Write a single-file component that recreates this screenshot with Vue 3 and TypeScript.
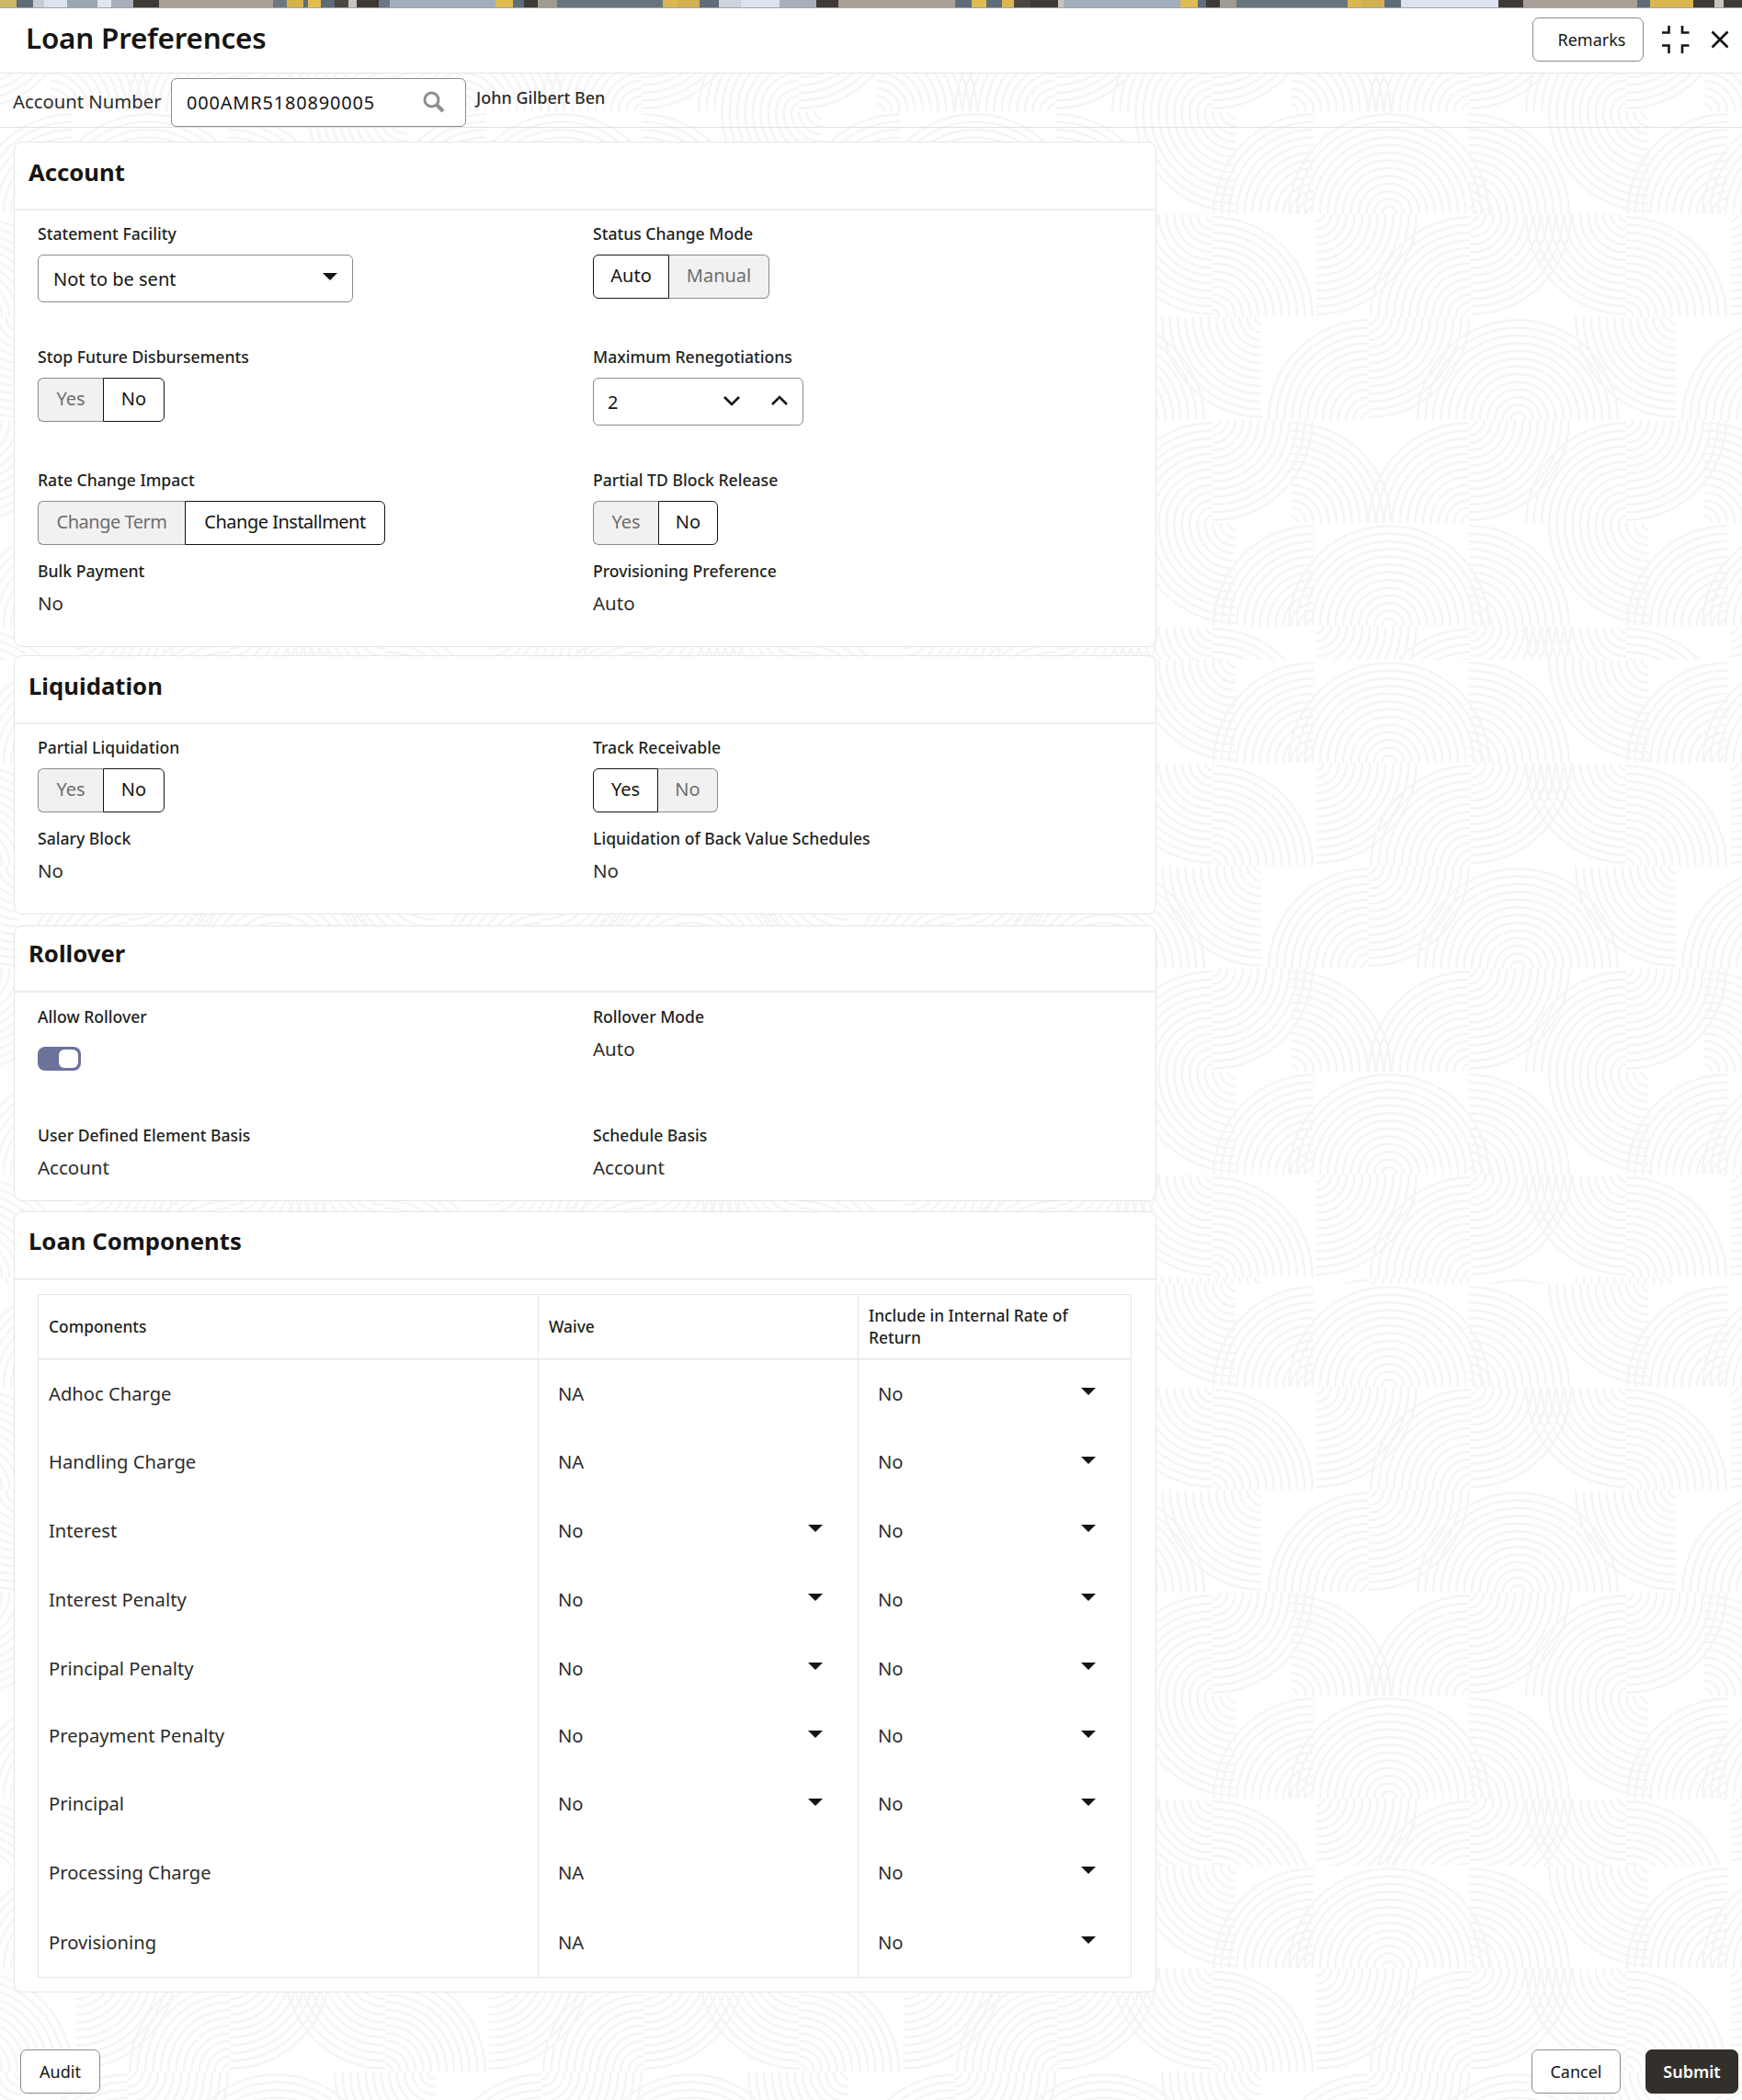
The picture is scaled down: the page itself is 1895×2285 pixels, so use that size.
<script setup lang="ts">
type Quad = 'UL' | 'UR' | 'LL' | 'LR'
const rowsDef: [Quad, number, number][][] = [
  [['LL', 84, 0], ['UL', 169, 112], ['UL', 251, 112], ['UR', 251, 112], ['UR', 338, 112]],
  [['LL', 59, 0], ['UR', 59, 112], ['LR', 172, 0], ['UL', 340, 112], ['LR', 340, 0]],
  [['LL', 113, 0], ['UL', 229, 112], ['LR', 229, 0], ['UL', 391, 112], ['UR', 391, 112]],
  [['UL', 59, 112], ['LR', 59, 0], ['UR', 144, 112], ['UL', 338, 112], ['LR', 338, 0]],
]
function arc(q: Quad, cx: number, cy: number, r: number): string {
  if (q === 'UL') return `M${cx - r} ${cy}A${r} ${r} 0 0 1 ${cx} ${cy - r}`
  if (q === 'UR') return `M${cx} ${cy - r}A${r} ${r} 0 0 1 ${cx + r} ${cy}`
  if (q === 'LL') return `M${cx - r} ${cy}A${r} ${r} 0 0 0 ${cx} ${cy + r}`
  return `M${cx} ${cy + r}A${r} ${r} 0 0 0 ${cx + r} ${cy}`
}
let d = ''
rowsDef.forEach((row, i) => {
  row.forEach(([q, x, y]) => {
    for (const off of [-450, 0, 450]) {
      for (let r = 8; r <= 110; r += 8.4) d += arc(q, x + off, y + i * 112, r)
    }
  })
})
const tilePath = d
const layers = [
  { id: 'bg1', y: 0, h: 718, a: 121 },
  { id: 'bg2', y: 718, h: 679, a: 718 },
  { id: 'bg3', y: 1397, h: 633, a: 1397 },
  { id: 'bg4', y: 2030, h: 255, a: 2030 },
]

interface Comp { name: string; waive: string; irr: string }
const components: Comp[] = [
  { name: 'Adhoc Charge', waive: 'NA', irr: 'No' },
  { name: 'Handling Charge', waive: 'NA', irr: 'No' },
  { name: 'Interest', waive: 'No', irr: 'No' },
  { name: 'Interest Penalty', waive: 'No', irr: 'No' },
  { name: 'Principal Penalty', waive: 'No', irr: 'No' },
  { name: 'Prepayment Penalty', waive: 'No', irr: 'No' },
  { name: 'Principal', waive: 'No', irr: 'No' },
  { name: 'Processing Charge', waive: 'NA', irr: 'No' },
  { name: 'Provisioning', waive: 'NA', irr: 'No' },
]
</script>

<template>
  <div class="page">
    <svg class="backdrop" width="1895" height="2285" aria-hidden="true">
      <defs>
        <pattern
          v-for="l in layers"
          :key="l.id"
          :id="l.id"
          patternUnits="userSpaceOnUse"
          width="450"
          height="448"
          :patternTransform="`translate(360 ${l.a})`"
        >
          <path :d="tilePath" fill="none" stroke="#f5f5f5" stroke-width="2.5" />
        </pattern>
      </defs>
      <rect v-for="l in layers" :key="l.id" x="0" :y="l.y" width="1895" :height="l.h" :fill="`url(#${l.id})`" />
    </svg>

    <div class="content">
      <div class="strip"></div>

      <header class="titlebar">
        <h1>Loan Preferences</h1>
        <div class="title-actions">
          <button class="btn remarks">Remarks</button>
          <svg class="ico-collapse" width="30" height="30" viewBox="0 0 30 30" fill="none" stroke="#161513" stroke-width="2.6">
            <path d="M0 7.5h7.5V0M22 0v7.5h7.5M0 21.5h7.5V30M29.5 21.5H22V30" />
          </svg>
          <svg class="ico-close" width="20" height="20" viewBox="0 0 20 20" fill="none" stroke="#161513" stroke-width="2.6">
            <path d="M1.5 1.5l17 17M18.5 1.5l-17 17" />
          </svg>
        </div>
      </header>

      <div class="subbar">
        <span class="acc-label">Account Number</span>
        <div class="acc-input">
          <span class="acc-num">000AMR5180890005</span>
          <svg width="24" height="24" viewBox="0 0 24 24" fill="none" stroke="#8f8e8c" stroke-width="3">
            <circle cx="9.5" cy="9.5" r="7.5" />
            <path d="M15 15l7 7" stroke-width="4" />
          </svg>
        </div>
        <span class="acc-name">John Gilbert Ben</span>
      </div>

      <section class="card card-account">
        <h2 class="card-title">Account</h2>
        <div class="fields rows-account">
          <div class="field">
            <label>Statement Facility</label>
            <div class="select">
              <span>Not to be sent</span>
              <i class="tri"></i>
            </div>
          </div>
          <div class="field">
            <label>Status Change Mode</label>
            <div class="seg">
              <span class="opt on w83">Auto</span>
              <span class="opt off w109">Manual</span>
            </div>
          </div>
          <div class="field">
            <label>Stop Future Disbursements</label>
            <div class="seg">
              <span class="opt off w71">Yes</span>
              <span class="opt on w67">No</span>
            </div>
          </div>
          <div class="field">
            <label>Maximum Renegotiations</label>
            <div class="stepper">
              <span class="stepper-val">2</span>
              <svg class="chev-down" width="20" height="12" viewBox="0 0 20 12" fill="none" stroke="#161513" stroke-width="2.6">
                <path d="M2 2l8 8 8-8" />
              </svg>
              <svg class="chev-up" width="20" height="12" viewBox="0 0 20 12" fill="none" stroke="#161513" stroke-width="2.6">
                <path d="M2 10l8-8 8 8" />
              </svg>
            </div>
          </div>
          <div class="field">
            <label>Rate Change Impact</label>
            <div class="seg tight">
              <span class="opt off w160">Change Term</span>
              <span class="opt on w218">Change Installment</span>
            </div>
          </div>
          <div class="field">
            <label>Partial TD Block Release</label>
            <div class="seg">
              <span class="opt off w71">Yes</span>
              <span class="opt on w65">No</span>
            </div>
          </div>
          <div class="field">
            <label>Bulk Payment</label>
            <div class="value">No</div>
          </div>
          <div class="field">
            <label>Provisioning Preference</label>
            <div class="value">Auto</div>
          </div>
        </div>
      </section>

      <section class="card card-liq">
        <h2 class="card-title">Liquidation</h2>
        <div class="fields rows-liq">
          <div class="field">
            <label>Partial Liquidation</label>
            <div class="seg">
              <span class="opt off w71">Yes</span>
              <span class="opt on w67">No</span>
            </div>
          </div>
          <div class="field">
            <label>Track Receivable</label>
            <div class="seg">
              <span class="opt on w71">Yes</span>
              <span class="opt off w65">No</span>
            </div>
          </div>
          <div class="field">
            <label>Salary Block</label>
            <div class="value">No</div>
          </div>
          <div class="field">
            <label>Liquidation of Back Value Schedules</label>
            <div class="value">No</div>
          </div>
        </div>
      </section>

      <section class="card card-roll">
        <h2 class="card-title short">Rollover</h2>
        <div class="fields rows-roll">
          <div class="field">
            <label>Allow Rollover</label>
            <div class="toggle"><i></i></div>
          </div>
          <div class="field">
            <label>Rollover Mode</label>
            <div class="value">Auto</div>
          </div>
          <div class="field">
            <label>User Defined Element Basis</label>
            <div class="value">Account</div>
          </div>
          <div class="field">
            <label>Schedule Basis</label>
            <div class="value">Account</div>
          </div>
        </div>
      </section>

      <section class="card card-comp">
        <h2 class="card-title">Loan Components</h2>
        <table class="grid">
          <colgroup>
            <col class="c1" />
            <col class="c2" />
            <col class="c3" />
          </colgroup>
          <thead>
            <tr>
              <th>Components</th>
              <th>Waive</th>
              <th>Include in Internal Rate of Return</th>
            </tr>
          </thead>
          <tbody>
            <tr v-for="c in components" :key="c.name">
              <td class="name">{{ c.name }}</td>
              <td class="pick p-waive">
                <div class="pick-in">
                  <span>{{ c.waive }}</span>
                  <i v-if="c.waive === 'No'" class="tri"></i>
                </div>
              </td>
              <td class="pick p-irr">
                <div class="pick-in">
                  <span>{{ c.irr }}</span>
                  <i class="tri"></i>
                </div>
              </td>
            </tr>
          </tbody>
        </table>
      </section>

      <footer class="actions">
        <button class="btn audit">Audit</button>
        <div class="actions-right">
          <button class="btn cancel">Cancel</button>
          <button class="btn submit">Submit</button>
        </div>
      </footer>
    </div>
  </div>
</template>

<style>
html, body { margin: 0; background: #fff; }
</style>

<style scoped>
.page {
  position: relative;
  width: 1895px;
  height: 2285px;
  overflow: hidden;
  background: #fff;
  color: #161513;
  font-family: "Noto Sans", "Open Sans", sans-serif;
}
.backdrop { position: absolute; left: 0; top: 0; }
.content { position: relative; display: flex; flex-direction: column; height: 2285px; }

.strip {
  height: 9px;
  box-sizing: border-box;
  border-bottom: 1px solid #a3a5a8;
  background: linear-gradient(90deg,
    #cdb766 0 18px, #5d6b78 18px 36px, #c5ccd3 36px 48px, #dbe4ee 48px 73px, #9aa6b1 73px 106px,
    #e0e6ec 106px 121px, #a7b0ba 121px 145px, #3f3a35 145px 173px, #a9a196 173px 297px,
    #6a7885 297px 312px, #d6b24a 312px 330px, #5e6b78 330px 335px, #e2bd4c 335px 349px, #5e6b78 349px 364px,
    #4a4640 364px 379px, #c7c4bb 379px 388px, #3d3935 388px 412px, #6a7885 412px 424px,
    #a2aebb 424px 539px, #e0bc50 539px 558px, #5f6d7b 558px 570px, #3f3a35 570px 585px,
    #a09a90 585px 606px, #68757f 606px 721px, #dcb64e 721px 737px, #d3b052 737px 761px,
    #5f6d7b 761px 782px, #cbd3db 782px 806px, #dbe4ee 806px 848px, #a7b0ba 848px 888px,
    #3f3a35 888px 912px, #a9a196 912px 1039px, #5f6d7b 1039px 1057px, #e0bc50 1057px 1073px, #5f6d7b 1073px 1090px,
    #d9b64e 1090px 1103px, #4a4640 1103px 1121px, #3d3935 1121px 1151px, #c7c4bb 1151px 1157px,
    #a2aebb 1157px 1284px, #e0bc50 1284px 1303px, #5f6d7b 1303px 1312px, #3f3a35 1312px 1327px,
    #a09a90 1327px 1345px, #68757f 1345px 1466px, #dcb64e 1466px 1481px, #d3b052 1481px 1506px,
    #5f6d7b 1506px 1524px, #dbe4ee 1524px 1630px, #3f3a35 1630px 1657px, #a9a196 1657px 1781px,
    #5f6d7b 1781px 1795px, #dcb64e 1795px 1842px, #3f3a35 1842px 1865px, #c7c4bb 1865px 1875px, #3d3935 1875px 1895px);
}

.titlebar {
  height: 71px;
  box-sizing: border-box;
  display: flex;
  align-items: center;
  justify-content: space-between;
  padding: 0 14px 2px 28px;
  background: #fff;
  border-bottom: 1px solid #e4e4e4;
}
.titlebar h1 { margin: -5px 0 0; font-size: 31.4px; font-weight: 600; line-height: 40px; letter-spacing: -0.2px; }
.title-actions { display: flex; align-items: center; }
.ico-collapse { margin-left: 20px; }
.ico-close { margin-left: 23px; }

.btn {
  font-family: inherit;
  height: 48px;
  box-sizing: border-box;
  border: 1px solid #8c8b8a;
  border-radius: 7px;
  background: #fff;
  color: #161513;
  font-size: 18px;
  padding: 0;
}
.remarks { width: 121px; padding-left: 8px; }

.subbar {
  height: 59px;
  box-sizing: border-box;
  padding: 5px 0 0 14px;
  display: flex;
  align-items: flex-start;
  border-bottom: 1px solid #e0e0e0;
}
.acc-label { font-size: 20.3px; line-height: 50px; color: #2e2c2a; width: 172px; flex: none; }
.acc-input {
  width: 321px;
  height: 53px;
  box-sizing: border-box;
  border: 1px solid #8c8b8a;
  border-radius: 6px;
  background: #fff;
  display: flex;
  align-items: center;
  justify-content: space-between;
  padding: 0 22px 0 16px;
  font-size: 20px;
}
.acc-num { letter-spacing: 0.8px; }
.acc-input svg { margin-top: -2px; }
.acc-name { margin-left: 11px; font-size: 18px; font-weight: 500; line-height: 42px; color: #2e2c2a; }

.card {
  width: 1243px;
  box-sizing: border-box;
  margin-left: 15px;
  background: #fff;
  border: 1px solid #e6e6e6;
  border-radius: 9px;
}
.card-account { margin-top: 15px; height: 550px; }
.card-liq { margin-top: 9px; height: 282px; }
.card-roll { margin-top: 12px; height: 300px; }
.card-comp { margin-top: 11px; height: 850px; }

.card-title {
  margin: 0;
  height: 74px;
  box-sizing: border-box;
  padding: 11px 0 0 15px;
  border-bottom: 2px solid #ededed;
  font-size: 25.7px;
  font-weight: 700;
  line-height: 44px;
}
.card-title.short { height: 72px; padding-top: 8px; }
.card-comp .card-title { padding-top: 10px; }

.fields {
  display: grid;
  grid-template-columns: 604px 1fr;
  padding: 13px 0 0 25px;
}
.rows-account { grid-template-rows: 134px 134px 99px 100px; }
.rows-liq { grid-template-rows: 99px 100px; }
.rows-roll { grid-template-rows: 129px 90px; padding-top: 14px; }

.field label {
  display: block;
  font-size: 17.6px;
  font-weight: 500;
  line-height: 24px;
  margin-bottom: 11px;
  color: #211f1d;
}
.value { font-size: 20.5px; line-height: 24px; color: #2e2c2a; }

.select {
  width: 343px;
  height: 52px;
  box-sizing: border-box;
  border: 1px solid #8c8b8a;
  border-radius: 6px;
  display: flex;
  align-items: center;
  justify-content: space-between;
  padding: 0 16px 0 16px;
  font-size: 20px;
}
.select .tri { margin-top: -4px; }
.tri {
  display: inline-block;
  width: 0;
  height: 0;
  border-left: 8px solid transparent;
  border-right: 8px solid transparent;
  border-top: 8px solid #161513;
}

.seg { display: flex; height: 48px; font-size: 20px; }
.seg.tight { letter-spacing: -0.5px; }
.opt {
  box-sizing: border-box;
  display: flex;
  align-items: center;
  justify-content: center;
  padding-bottom: 4px;
}
.opt.on { background: #fff; border: 1px solid #161513; color: #161513; }
.opt.off { background: #f1f1f1; border: 1px solid #8c8b8a; color: #6f6e6c; }
.opt:first-child { border-radius: 6px 0 0 6px; }
.opt:last-child { border-radius: 0 6px 6px 0; }
.opt.off:first-child { border-right: 0; }
.opt.off:last-child { border-left: 0; }
.w83 { width: 83px; }
.w109 { width: 109px; }
.w71 { width: 71px; }
.w67 { width: 67px; }
.w65 { width: 65px; }
.w160 { width: 160px; }
.w218 { width: 218px; }

.stepper {
  width: 229px;
  height: 52px;
  box-sizing: border-box;
  border: 1px solid #8c8b8a;
  border-radius: 6px;
  display: flex;
  align-items: center;
  padding-left: 15px;
  font-size: 20px;
}
.stepper-val { width: 125px; }
.chev-down, .chev-up { margin-top: -2px; }
.chev-up { margin-left: 32px; }

.toggle {
  width: 47px;
  height: 26px;
  box-sizing: border-box;
  margin-top: 21px;
  background: #6c739b;
  border-radius: 8px;
  padding: 3px 3px 3px 23px;
}
.toggle i { display: block; height: 20px; background: #fff; border-radius: 6px; }

.grid {
  margin: 15px 0 0 25px;
  width: 1189px;
  table-layout: fixed;
  border-collapse: collapse;
  border: 1px solid #e6e6e6;
}
.c1 { width: 544px; }
.c2 { width: 348px; }
.c3 { width: 297px; }
.grid th {
  height: 70px;
  box-sizing: border-box;
  padding: 0 40px 0 11px;
  text-align: left;
  font-size: 17.4px;
  font-weight: 500;
  line-height: 24px;
  color: #211f1d;
  border-bottom: 2px solid #ebebeb;
  border-left: 1px solid #e6e6e6;
}
.grid td {
  height: 74.8px;
  box-sizing: border-box;
  padding: 0 0 1px;
  font-size: 20.2px;
  color: #2e2c2a;
  border-left: 1px solid #e6e6e6;
}
.grid tbody tr:nth-child(6) td { height: 72.8px; }
.grid tbody tr:nth-child(9) td { height: 76.8px; }
.grid td.name { padding-left: 11px; }
.pick-in { display: flex; align-items: center; justify-content: space-between; padding: 0 38px 0 21px; }
.pick .tri { margin-top: -3px; }

.actions {
  margin-top: 62px;
  display: flex;
  justify-content: space-between;
  padding: 0 4px 0 22px;
}
.audit { width: 87px; }
.actions-right { display: flex; gap: 27px; }
.cancel { width: 97px; }
.submit { width: 101px; background: #33302c; border-color: #33302c; color: #fff; font-weight: 600; }
</style>
